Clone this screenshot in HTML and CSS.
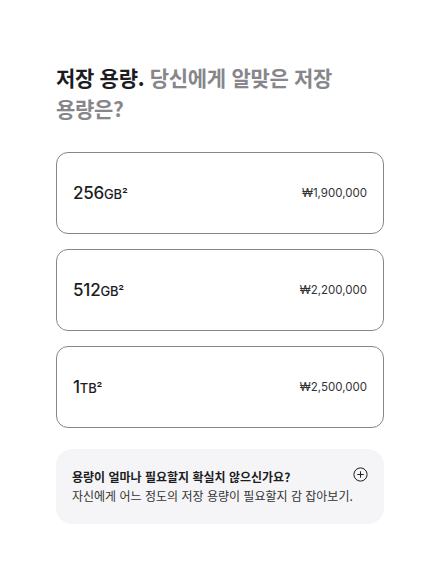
FILE: index.html
```html
<!DOCTYPE html>
<html lang="ko">
<head>
<meta charset="utf-8">
<link rel="stylesheet" href="styles.css">
</head>
<body>
<main class="page">
  <h1 class="title"><span class="dark">저장 용량.</span> 당신에게 알맞은 저장 용량은?</h1>
  <div class="options">
    <div class="option"><span class="cap">256<span class="unit">GB²</span></span><span class="price">₩1,900,000</span></div>
    <div class="option"><span class="cap">512<span class="unit">GB²</span></span><span class="price">₩2,200,000</span></div>
    <div class="option"><span class="cap">1<span class="unit">TB²</span></span><span class="price">₩2,500,000</span></div>
  </div>
  <div class="help">
    <div class="help-text">
      <p class="help-title">용량이 얼마나 필요할지 확실치 않으신가요?</p>
      <p class="help-sub">자신에게 어느 정도의 저장 용량이 필요할지 감 잡아보기.</p>
    </div>
    <svg class="plus" width="15" height="15" viewBox="0 0 15 15"><circle cx="7.5" cy="7.5" r="6.6" fill="none" stroke="#1d1d1f" stroke-width="1"/><path d="M7.5 4.3v6.4M4.3 7.5h6.4" stroke="#1d1d1f" stroke-width="1"/></svg>
  </div>
</main>
</body>
</html>
```
FILE: styles.css
```css
* { box-sizing: border-box; }
body {
  margin: 0;
  background: #fff;
  font-family: "Inter", "Noto Sans CJK KR", sans-serif;
  color: #1d1d1f;
}
.page {
  width: 328px;
  margin-left: 56px;
  padding-top: 62px;
}
.title {
  margin: 0;
  font-family: "Noto Sans CJK KR", sans-serif;
  font-size: 21px;
  line-height: 31px;
  font-weight: 700;
  color: #86868b;
  letter-spacing: -0.3px;
  word-break: keep-all;
}
.title .dark { color: #1d1d1f; }
.options {
  margin-top: 28px;
  display: flex;
  flex-direction: column;
  gap: 15px;
}
.option {
  height: 82px;
  border: 1px solid #86868b;
  border-radius: 12px;
  display: flex;
  align-items: center;
  justify-content: space-between;
  padding: 0 16px 0 16px;
}
.cap {
  font-size: 17px;
  font-weight: 500;
  letter-spacing: -0.2px;
}
.unit {
  font-size: 13px;
  font-weight: 500;
}
.price {
  font-size: 11.5px;
  color: #333336;
}
.help {
  margin-top: 21px;
  background: #f5f5f7;
  border-radius: 16px;
  padding: 18px 16px 19px 16px;
  display: flex;
  justify-content: space-between;
  align-items: flex-start;
}
.help p { margin: 0; }
.help-title {
  font-family: "Noto Sans CJK KR", sans-serif;
  font-size: 12px;
  font-weight: 700;
  line-height: 19px;
}
.help-sub {
  font-family: "Noto Sans CJK KR", sans-serif;
  font-size: 12px;
  line-height: 19px;
  color: #333;
}
.plus { margin-top: 0; margin-right: 0; }
```
